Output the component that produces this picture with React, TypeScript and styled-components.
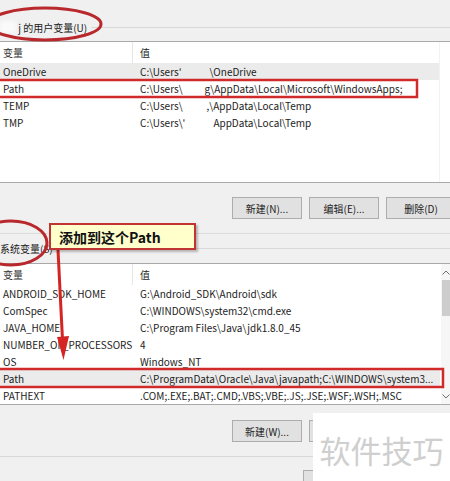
import React from "react";
import styled, { createGlobalStyle } from "styled-components";

const Global = createGlobalStyle`
  html, body { margin: 0; padding: 0; background: #f0f0f0; }
  body { width: 450px; height: 481px; overflow: hidden; }
`;

const Page = styled.div`
  position: relative;
  width: 450px;
  height: 481px;
  overflow: hidden;
  background: #f0f0f0;
  display: flex;
  flex-direction: column;
  font-family: "Noto Sans CJK SC", "Noto Sans", sans-serif;
  font-size: 10px;
  color: #1c1c1c;
  & > * {
    flex-shrink: 0;
  }
`;

const Legend = styled.div<{ $top: number }>`
  margin-top: ${(p) => p.$top}px;
  height: 16px;
  display: flex;
  align-items: center;
  gap: 4px;
`;

const LegendLabel = styled.span`
  white-space: nowrap;
  display: flex;
  align-items: center;
  color: #222;
`;

const Smudge = styled.span<{ $w: number }>`
  display: inline-block;
  width: ${(p) => p.$w}px;
  height: 12px;
  background: #fafafa;
  filter: blur(2px);
  vertical-align: middle;
`;

const LegendLine = styled.div`
  flex: 1;
  height: 1px;
  background: #d9d9d9;
`;

const List = styled.div<{ $top: number }>`
  margin-top: ${(p) => p.$top}px;
  height: 142px;
  box-sizing: border-box;
  background: #ffffff;
  border-top: 1px solid #a9a9a9;
  border-bottom: 1px solid #a9a9a9;
  display: flex;
`;

const Table = styled.div`
  flex: 1;
  min-width: 0;
  display: flex;
  flex-direction: column;
`;

const Gutter = styled.div`
  width: 10px;
  border-left: 1px solid #f2f2f2;
`;

const Row = styled.div<{ $selected?: boolean; $header?: boolean }>`
  display: grid;
  grid-template-columns: 133px minmax(0, 1fr);
  height: ${(p) => (p.$header ? 21 : 17)}px;
  flex-shrink: 0;
  align-items: center;
  background: ${(p) => (p.$selected ? "#ebebeb" : "transparent")};
  white-space: nowrap;
`;

const NameCell = styled.div<{ $header?: boolean }>`
  padding-left: 3px;
  height: 100%;
  display: flex;
  align-items: center;
  overflow: hidden;
  border-right: ${(p) => (p.$header ? "1px solid #e6e6e6" : "none")};
  box-sizing: border-box;
  color: ${(p) => (p.$header ? "#333" : "#1c1c1c")};
`;

const ValueCell = styled.div`
  padding-left: 7px;
  overflow: hidden;
  color: #1c1c1c;
`;

const Gap = styled.span<{ $w: number }>`
  display: inline-block;
  width: ${(p) => p.$w}px;
`;

const Scrollbar = styled.div`
  width: 17px;
  margin-right: -8px;
  margin-left: 1px;
  background: #f6f6f6;
  display: flex;
  flex-direction: column;
  align-items: center;
`;

const ScrollArrow = styled.div`
  height: 16px;
  width: 100%;
  display: flex;
  align-items: center;
  justify-content: flex-start;
  padding-left: 1px;
  box-sizing: border-box;
`;

const Thumb = styled.div`
  width: 9px;
  height: 36px;
  background: #cdcdcd;
  margin-left: 1px;
`;

const Track = styled.div`
  flex: 1;
  width: 100%;
  display: flex;
  flex-direction: column;
`;

const ButtonRow = styled.div<{ $top: number }>`
  margin-top: ${(p) => p.$top}px;
  height: 22px;
  padding-left: 232px;
  display: flex;
  gap: 7px;
`;

const Button = styled.div`
  flex: 0 0 70px;
  height: 22px;
  box-sizing: border-box;
  background: #e1e1e1;
  border: 1px solid #adadad;
  display: flex;
  align-items: center;
  justify-content: center;
  font-size: 10px;
  color: #222;
  white-space: nowrap;
`;

const Divider = styled.div<{ $top: number; $color?: string }>`
  margin-top: ${(p) => p.$top}px;
  height: 1px;
  background: ${(p) => p.$color || "#dcdcdc"};
`;

const Overlay = styled.svg`
  position: absolute;
  left: 0;
  top: 0;
  width: 450px;
  height: 481px;
  pointer-events: none;
`;

const Callout = styled.div`
  position: absolute;
  left: 49px;
  top: 223px;
  width: 147px;
  height: 27px;
  box-sizing: border-box;
  background: #ffffcc;
  border: 2px solid #c23434;
  box-shadow: 2px 2px 2px rgba(0, 0, 0, 0.25);
  display: flex;
  align-items: center;
  padding-left: 8px;
  font-size: 14px;
  font-weight: 700;
  color: #111;
  white-space: nowrap;
`;

const Watermark = styled.div`
  position: absolute;
  left: 313px;
  top: 413px;
  right: 0;
  bottom: 0;
  background: #ffffff;
  display: flex;
  align-items: center;
  justify-content: center;
  padding-top: 4px;
  font-size: 31px;
  color: #cfcfcf;
  white-space: nowrap;
`;

type Item = { name: string; value: React.ReactNode; selected?: boolean };

const userVars: Item[] = [
  { name: "OneDrive", value: <>C:\Users'<Gap $w={28} />\OneDrive</>, selected: true },
  { name: "Path", value: <>C:\Users\<Gap $w={22} />g\AppData\Local\Microsoft\WindowsApps;</> },
  { name: "TEMP", value: <>C:\Users\<Gap $w={24} />,\AppData\Local\Temp</> },
  { name: "TMP", value: <>C:\Users\'<Gap $w={28} />AppData\Local\Temp</> },
];

const sysVars: Item[] = [
  { name: "ANDROID_SDK_HOME", value: "G:\\Android_SDK\\Android\\sdk" },
  { name: "ComSpec", value: "C:\\WINDOWS\\system32\\cmd.exe" },
  { name: "JAVA_HOME", value: "C:\\Program Files\\Java\\jdk1.8.0_45" },
  { name: "NUMBER_OF_PROCESSORS", value: "4" },
  { name: "OS", value: "Windows_NT" },
  { name: "Path", value: "C:\\ProgramData\\Oracle\\Java\\javapath;C:\\WINDOWS\\system3...", selected: true },
  { name: "PATHEXT", value: ".COM;.EXE;.BAT;.CMD;.VBS;.VBE;.JS;.JSE;.WSF;.WSH;.MSC" },
];

const Rows = ({ items }: { items: Item[] }) => (
  <Table>
    <Row $header>
      <NameCell $header>变量</NameCell>
      <ValueCell>值</ValueCell>
    </Row>
    {items.map((it) => (
      <Row key={it.name} $selected={it.selected}>
        <NameCell>{it.name}</NameCell>
        <ValueCell>{it.value}</ValueCell>
      </Row>
    ))}
  </Table>
);

const Chevron = ({ up }: { up?: boolean }) => (
  <svg width="8" height="5" viewBox="0 0 8 5">
    <path
      d={up ? "M0.5 4.5 L4 1 L7.5 4.5" : "M0.5 0.5 L4 4 L7.5 0.5"}
      fill="none"
      stroke="#707070"
      strokeWidth="1"
    />
  </svg>
);

export default function App() {
  return (
    <Page>
      <Global />
      <Legend $top={19}>
        <LegendLabel>
          <Smudge $w={16} />
          &nbsp;j 的用户变量(U)
        </LegendLabel>
        <LegendLine />
      </Legend>
      <List $top={6}>
        <Rows items={userVars} />
        <Gutter />
      </List>
      <ButtonRow $top={14}>
        <Button>新建(N)...</Button>
        <Button>编辑(E)...</Button>
        <Button>删除(D)</Button>
      </ButtonRow>
      <Divider $top={14} />
      <Legend $top={6}>
        <LegendLabel>系统变量(S)</LegendLabel>
        <LegendLine />
      </Legend>
      <List $top={7}>
        <Rows items={sysVars} />
        <Scrollbar>
          <ScrollArrow>
            <Chevron up />
          </ScrollArrow>
          <Track>
            <Thumb />
          </Track>
          <ScrollArrow>
            <Chevron />
          </ScrollArrow>
        </Scrollbar>
      </List>
      <ButtonRow $top={15}>
        <Button>新建(W)...</Button>
        <Button />
      </ButtonRow>
      <Divider $top={14} $color="#d8d8d8" />
      <ButtonRow $top={13}>
        <Gap $w={64} />
        <Button />
      </ButtonRow>

      <Overlay viewBox="0 0 450 481">
        <ellipse cx="45" cy="24" rx="56" ry="16" fill="none" stroke="#b8282c" strokeWidth="3" />
        <ellipse cx="11" cy="243" rx="36" ry="22" fill="none" stroke="#b8282c" strokeWidth="3" />
        <rect x="-3" y="80" width="420" height="17" fill="none" stroke="#d02a2a" strokeWidth="2.5" />
        <rect x="-3" y="369" width="446" height="18" fill="none" stroke="#d02a2a" strokeWidth="2.5" />
        <line x1="58" y1="250" x2="62.5" y2="340" stroke="#d42424" strokeWidth="3" />
        <polygon points="57,337 69,336 63.5,360" fill="#d42424" />
      </Overlay>
      <Callout>添加到这个Path</Callout>
      <Watermark>软件技巧</Watermark>
    </Page>
  );
}
